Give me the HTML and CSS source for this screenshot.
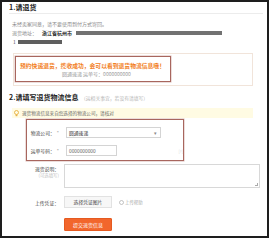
FILE: index.html
```html
<!DOCTYPE html>
<html lang="zh-CN">
<head>
<meta charset="utf-8">
<title>退货</title>
<link rel="stylesheet" href="styles.css">
</head>
<body>
<div class="frame">
  <div class="title">1.请退货</div>
  <div class="rule"></div>
  <div class="lines">
    <p class="line muted">未经卖家同意，请不要使用到付方式寄回。</p>
    <p class="line"><span class="muted">退货地址：</span><b class="city">浙江省杭州市</b><span class="redact r1"></span></p>
    <p class="line"><span class="num">1</span><span class="redact r2"></span></p>
  </div>
  <div class="notice">
    <div class="mark mark1">
      <p class="warn">预约快递退货，揽收成功，会可以看到退货物流信息哦！</p>
      <p class="track">圆通速递 运单号：0000000000</p>
    </div>
  </div>
  <div class="title title2">2.请填写退货物流信息 <span class="sub">（运相关事宜，若没有请填写）</span></div>
  <div class="tip">
    <svg class="bulb" width="5" height="7" viewBox="0 0 5 7"><circle cx="2.5" cy="2.5" r="2" fill="none" stroke="#e8b040" stroke-width="0.9"/><rect x="1.6" y="4.6" width="1.8" height="1.6" fill="#e8b040"/></svg>
    <span>退货物流信息来自您选择的物流公司，请核对</span>
  </div>
  <div class="form">
    <div class="mark mark2">
      <div class="row">
        <span class="label">物流公司：<i class="req">*</i></span>
        <span class="select">圆通速递<span class="caret">▾</span></span>
      </div>
      <div class="row">
        <span class="label">运单号码：<i class="req">*</i></span>
        <span class="input">0000000000</span>
        <span class="help">[?]</span>
      </div>
    </div>
    <div class="row plain note-row">
      <span class="label stack">退货说明：<em>(可选填写)</em></span>
      <span class="textarea"><span class="grip"></span></span>
    </div>
    <div class="row plain upload-row">
      <span class="label">上传凭证：</span>
      <span class="pick">选择凭证图片</span>
      <span class="uphelp"><svg width="5" height="5" viewBox="0 0 5 5"><circle cx="2.5" cy="2.5" r="2" fill="none" stroke="#aaa" stroke-width="0.7"/></svg>上传帮助</span>
    </div>
    <div class="row plain submit-row">
      <span class="label"></span>
      <span class="submit">提交退货信息</span>
    </div>
  </div>
</div>
</body>
</html>
```

FILE: styles.css
```css
* { box-sizing: border-box; }
html, body { margin: 0; padding: 0; background: #fff; }
body {
  font-family: "Noto Sans CJK SC", "Noto Sans", sans-serif;
  color: #333;
}
p { margin: 0; }

.frame {
  width: 269px;
  height: 238px;
  border: 2px solid #1e1e1e;
  background: #fff;
  overflow: hidden;
}

.title {
  height: 11px;
  line-height: 11px;
  padding-left: 7px;
  font-size: 7px;
  font-weight: bold;
  color: #222;
  white-space: nowrap;
}
.rule {
  height: 1px;
  margin: 0 4px 0 7px;
  background: #ececec;
}

.lines { padding: 5px 0 0 10px; }
.line {
  height: 9px;
  line-height: 9px;
  font-size: 5px;
  display: flex;
  align-items: center;
  white-space: nowrap;
}
.muted { color: #8a8a8a; }
.city { color: #222; margin-left: 5px; font-weight: bold; }
.redact {
  display: block;
  height: 4px;
  background: #727272;
}
.r1 { width: 146px; margin-left: 4px; }
.r2 { width: 44px; margin-left: 2px; background: #5e5e5e; }
.num { color: #555; margin-left: 1px; }

.notice {
  margin: 7px 0 0 11px;
  width: 240px;
  height: 33px;
  border: 1px solid #f1e4da;
  padding: 2px 0 0 1px;
}
.mark { border: 1px solid #a8665e; box-shadow: 0 0 0 0.5px rgba(168, 102, 94, 0.45); }
.mark1 {
  width: 156px;
  height: 26px;
  padding-top: 5px;
}
.warn {
  height: 8px;
  line-height: 8px;
  font-size: 5.8px;
  font-weight: bold;
  color: #f2801e;
  padding-left: 4px;
  white-space: nowrap;
}
.track {
  height: 8px;
  line-height: 8px;
  font-size: 5px;
  color: #9a9a9a;
  padding-left: 46px;
  white-space: nowrap;
}

.title2 {
  margin-top: 6px;
  height: 10px;
  line-height: 10px;
}
.sub {
  font-size: 4.8px;
  font-weight: normal;
  color: #b5b5b5;
  margin-left: 1px;
}

.tip {
  margin: 6px 0 0 10px;
  width: 241px;
  height: 10px;
  background: #fffbe3;
  display: flex;
  align-items: center;
  gap: 3px;
  padding-left: 2px;
  font-size: 4.6px;
  color: #666;
  white-space: nowrap;
}
.bulb { display: block; }

.form { margin: 1px 0 0 24px; }
.mark2 {
  width: 158px;
  height: 42px;
  padding-top: 7px;
}
.row {
  display: flex;
  align-items: center;
  height: 11px;
  white-space: nowrap;
}
.mark2 .row + .row { margin-top: 7px; }
.label {
  width: 32px;
  flex: none;
  text-align: right;
  font-size: 4.8px;
  color: #444;
  margin-right: 7px;
}
.req { font-style: normal; color: #999; margin-left: 2px; }
.select, .input {
  height: 11px;
  border: 1px solid #d4d4d4;
  font-size: 4.8px;
  line-height: 9px;
  padding-left: 2px;
  color: #333;
  position: relative;
}
.select { width: 95px; }
.caret {
  position: absolute;
  right: 3px;
  top: 0;
  font-size: 5px;
  color: #888;
}
.input { width: 74px; color: #666; }
.help {
  margin-left: 61px;
  font-size: 4px;
  color: #d8d8d8;
}

.plain .label { width: 33px; margin-right: 5px; }
.note-row {
  margin-top: 3px;
  height: 24px;
  align-items: flex-start;
}
.stack {
  display: flex;
  flex-direction: column;
  align-items: flex-end;
  padding-top: 2px;
  line-height: 6px;
}
.stack em { font-style: normal; color: #c2c2c2; font-size: 4.4px; }
.textarea {
  width: 196px;
  height: 24px;
  border: 1px solid #d8d8d8;
  position: relative;
}
.grip {
  position: absolute;
  right: 1px;
  bottom: 1px;
  width: 3px;
  height: 3px;
  border-right: 1px solid #aaa;
  border-bottom: 1px solid #aaa;
}

.upload-row { margin-top: 8px; height: 12px; }
.pick {
  width: 48px;
  height: 12px;
  border: 1px solid #e2e2e2;
  background: #f7f7f7;
  font-size: 4.8px;
  line-height: 10px;
  text-align: center;
  color: #444;
}
.uphelp {
  margin-left: 7px;
  display: flex;
  align-items: center;
  gap: 1px;
  font-size: 4.4px;
  color: #aaa;
}

.submit-row { margin-top: 10px; height: 13px; }
.submit {
  width: 48px;
  height: 13px;
  background: #f2662c;
  border: 1px solid #e55a20;
  border-radius: 1px;
  color: #fff;
  font-size: 5px;
  line-height: 11px;
  text-align: center;
}
```
